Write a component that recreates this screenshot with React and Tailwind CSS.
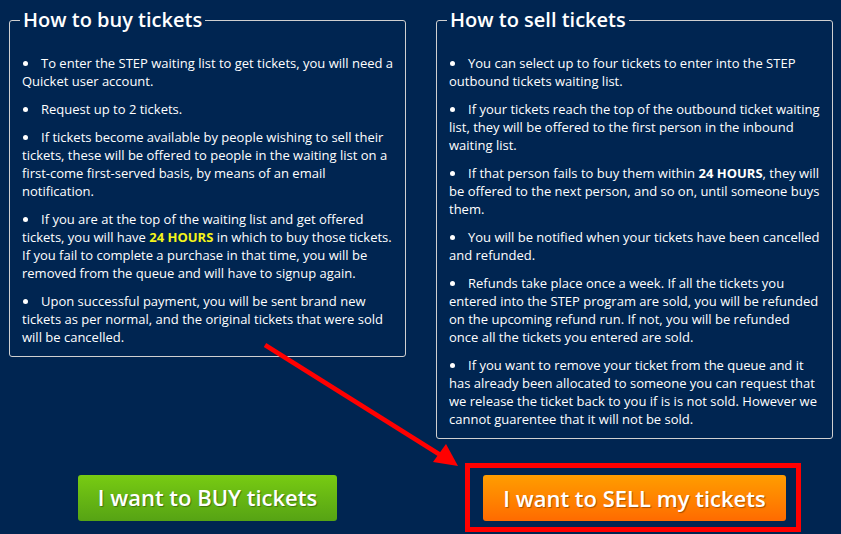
import React from "react";

const font = { fontFamily: '"Open Sans", "Noto Sans", sans-serif' };

function Item({ children }) {
  return (
    <p className="mb-[10px] text-[13px] leading-[18px] text-white">
      <span className="inline-block w-[19px] pl-[1px]">
        <span className="inline-block h-[5px] w-[5px] rounded-full bg-white align-[2px]" />
      </span>
      {children}
    </p>
  );
}

function Panel({ title, innerClass, children }) {
  return (
    <fieldset className="w-[397px] rounded-[3px] border border-[#d0d0d0] pl-[10px] pr-[8px]">
      <legend className="px-[3px] text-[20px] leading-[24px] font-semibold text-white">{title}</legend>
      <div className={innerClass}>{children}</div>
    </fieldset>
  );
}

export default function App() {
  return (
    <div className="relative h-[534px] w-[841px] overflow-hidden bg-[#002551]" style={font}>
      <div className="flex items-start gap-[30px] pl-[9px] pt-[8px]">
        <Panel title="How to buy tickets" innerClass="pl-[2px] pt-[22px] w-[377px]">
          <Item>To enter the STEP waiting list to get tickets, you will need a Quicket user account.</Item>
          <Item>Request up to 2 tickets.</Item>
          <Item>
            If tickets become available by people wishing to sell their tickets, these will be offered to people in the waiting list on a first-come first-served basis, by means of an email notification.
          </Item>
          <Item>
            If you are at the top of the waiting list and get offered tickets, you will have{" "}
            <b className="font-bold text-[#f5f51a]">24 HOURS</b> in which to buy those tickets. If you fail to complete a purchase in that time, you will be removed from the queue and will have to signup again.
          </Item>
          <Item>
            Upon successful payment, you will be sent brand new tickets as per normal, and the original tickets that were sold will be cancelled.
          </Item>
        </Panel>
        <Panel title="How to sell tickets" innerClass="pl-[2px] pt-[22px] w-[373px]">
          <Item>You can select up to four tickets to enter into the STEP outbound tickets waiting list.</Item>
          <Item>
            If your tickets reach the top of the outbound ticket waiting list, they will be offered to the first person in the inbound waiting list.
          </Item>
          <Item>
            If that person fails to buy them within <b className="font-bold">24 HOURS</b>, they will be offered to the next person, and so on, until someone buys them.
          </Item>
          <Item>You will be notified when your tickets have been cancelled and refunded.</Item>
          <Item>
            Refunds take place once a week. If all the tickets you entered into the STEP program are sold, you will be refunded on the upcoming refund run. If not, you will be refunded once all the tickets you entered are sold.
          </Item>
          <Item>
            If you want to remove your ticket from the queue and it has already been allocated to someone you can request that we release the ticket back to you if is is not sold. However we cannot guarentee that it will not be sold.
          </Item>
        </Panel>
      </div>

      <div className="flex items-center gap-[30px] pl-[9px] pt-[24px]">
        <div className="flex w-[397px] justify-center">
          <button className="flex h-[46px] w-[259px] items-center justify-center rounded-[3px] bg-gradient-to-b from-[#78cb12] to-[#56a314] text-[22px] font-semibold text-white [text-shadow:1px_1px_1px_rgba(0,0,0,0.35)]">
            I want to BUY tickets
          </button>
        </div>
        <div className="flex w-[397px] justify-center">
          <div className="ml-[-3px] border-[5px] border-[#ff0000] pb-[6px] pl-[13px] pr-[10px] pt-[7px]">
            <button className="flex h-[46px] w-[303px] items-center justify-center rounded-[3px] bg-gradient-to-b from-[#ff9d00] to-[#ff6a00] text-[22px] font-semibold text-white [text-shadow:1px_1px_1px_rgba(0,0,0,0.35)]">
              I want to SELL my tickets
            </button>
          </div>
        </div>
      </div>

      <svg className="pointer-events-none absolute left-0 top-0" width="841" height="534" viewBox="0 0 841 534">
        <line x1="265" y1="345" x2="442" y2="456" stroke="#ff0000" strokeWidth="4.5" />
        <polygon points="458,466 433,462 446,444" fill="#ff0000" />
      </svg>
    </div>
  );
}
